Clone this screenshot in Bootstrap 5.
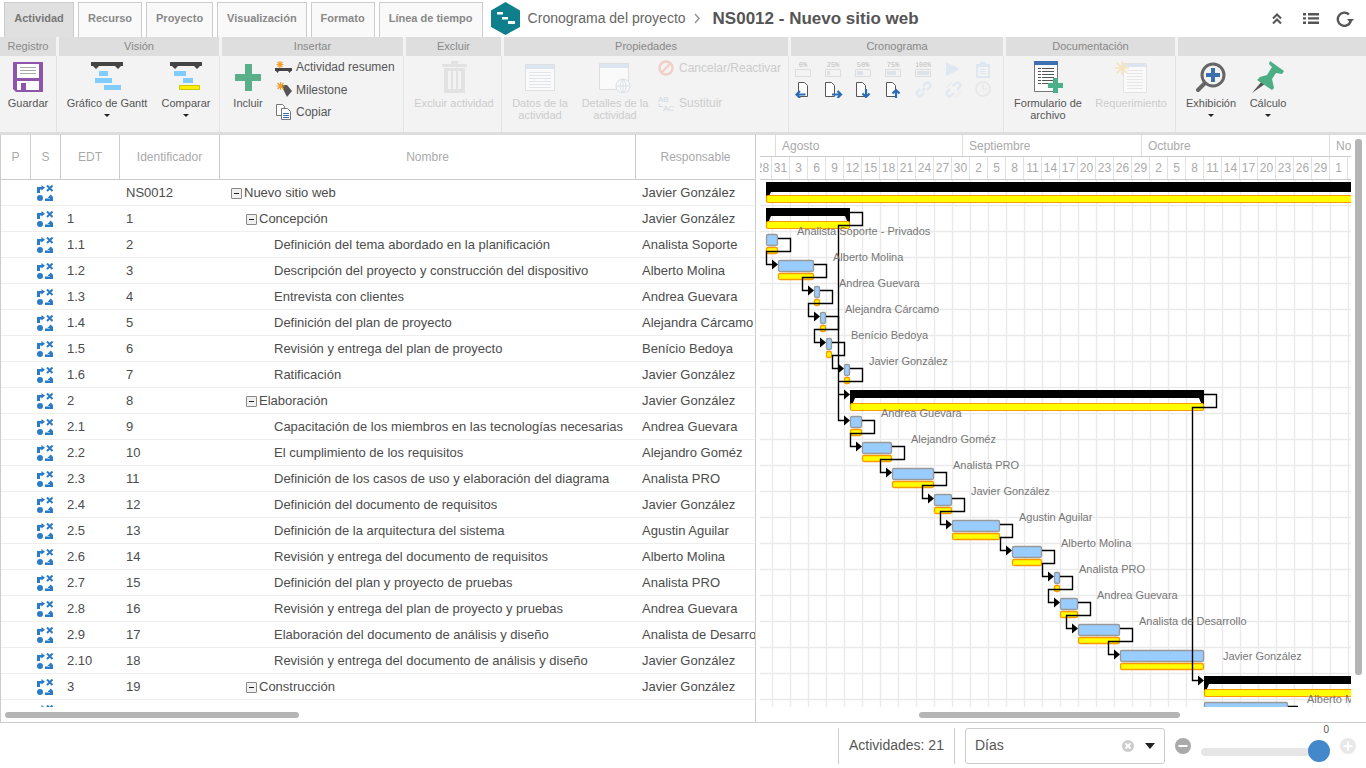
<!DOCTYPE html>
<html lang="es">
<head>
    <meta charset="UTF-8">
    <meta name="viewport" content="width=device-width, initial-scale=1.0">
    <title>Cronograma del proyecto</title>
    <link rel="stylesheet" href="https://cdn.jsdelivr.net/npm/bootstrap@5.3.0/dist/css/bootstrap.min.css">
    <style>
        html, body { height: 768px; overflow: hidden; }
        body { font-family: "Liberation Sans", Arial, sans-serif; background: #fff; color: #505050; }

        /* top bar */
        .top-bar { height: 37px; }
        .rib-tabs { padding: 2px 0 0 4px; gap: 4px; }
        .rib-tab { height: 35px; padding: 0 9px 3px; display: flex; align-items: center; justify-content: center; border: 1px solid #ccc; border-bottom: 0; background: #f9f9f9; color: #888; font-size: 11px; font-weight: 700; }
        .rib-tab.on { background: #e0e0e0; color: #777; width: 70px; }
        .rib-tab.long { width: 104px; }
        .logo-hex { margin: 0 8px 0 8px; }
        .crumb { font-size: 14px; color: #666; }
        .crumb-sep { margin: 0 12px 0 8px; }
        .plan-title { font-size: 17px; font-weight: 700; color: #555; }
        .top-tools { gap: 17px; padding-right: 12px; }

        /* ribbon */
        .ribbon { height: 98px; background: #f3f3f3; border-bottom: 3px solid #ddd; }
        .rb-group { display: flex; flex-direction: column; margin-right: 2px; flex: none; }
        .rb-head { height: 19px; margin-right: 1px; background: #dedede; color: #888; font-size: 11px; line-height: 19px; text-align: center; }
        .rb-body { flex: 1; display: flex; border-right: 1px solid #e3e3e3; }
        .w-reg { width: 57px; } .w-vis { width: 161px; } .w-ins { width: 182px; } .w-exc { width: 96px; }
        .w-pro { width: 285px; } .w-cro { width: 213px; } .w-doc { width: 170px; } .w-last { flex: 1; margin-right: 0; }
        .w-last .rb-head { margin-right: 0; }
        .w-last .rb-body { border-right: 0; }
        .rb-btn { display: flex; flex-direction: column; align-items: center; flex: none; font-size: 11px; line-height: 12px; text-align: center; color: #555; }
        .rb-ico { height: 32px; margin: 5px 0 4px; display: block; }
        .rb-off { color: #ccc; }
        .rb-caret { width: 0; height: 0; margin-top: 5px; border: 3px solid transparent; border-top-color: #222; border-bottom: 0; }
        .b96 { width: 96px; } .b62 { width: 62px; } .b52 { width: 52px; } .b56 { width: 56px; }
        .b72 { width: 72px; } .b78 { width: 78px; } .b84 { width: 84px; } .b82 { width: 82px; } .b66 { width: 66px; } .b48 { width: 48px; }
        .rb-list { font-size: 12px; color: #555; margin-left: 1px; }
        .rb-row { height: 22.5px; display: flex; align-items: center; gap: 4px; white-space: nowrap; }
        .rb-prop .rb-row { height: 22px; }
        .rb-prop { gap: 13px; margin-left: 4px; padding-top: 1px; color: #ccc; }
        .rb-prop .rb-row svg { margin-right: 1px; }
        .cron-grid { display: grid; grid-template-columns: repeat(7, 30px); grid-auto-rows: 17px; row-gap: 3px; padding: 5px 0 0 4px; }
        .cron-grid svg { display: block; }

        /* main panes */
        .plan-main { height: 588px; border-bottom: 1px solid #ccc; }
        .tree-pane { width: 756px; flex: none; border-left: 1px solid #ccc; border-right: 1px solid #ccc; }
        .tree-clip { height: 572px; overflow: hidden; }
        .plan-tbl { width: 754px; table-layout: fixed; border-collapse: separate; border-spacing: 0; font-size: 13px; margin: 0; }
        .plan-tbl>:not(caption)>*>* { padding: 0 6px; height: 26px; border-bottom: 1px solid #eee; color: #4c4c4c; white-space: nowrap; overflow: hidden; box-shadow: none; vertical-align: middle; }
        .plan-tbl>thead>tr>th { height: 45px; font-size: 12px; font-weight: 400; color: #aaa; text-align: center; border-bottom: 1px solid #ccc; border-right: 1px solid #ccc; }
        .plan-tbl>thead>tr>th:last-child { border-right: 0; }
        .c-p { width: 30px; } .c-s { width: 30px; } .c-e { width: 59px; } .c-i { width: 100px; } .c-n { width: 416px; } .c-r { width: 119px; }
        .stat-ico { display: block; margin: 1px 0 0 6px; }
        .tog-box { display: inline-block; width: 11px; height: 11px; margin-right: 2px; vertical-align: -2px; border: 1px solid #888; border-radius: 1px; background: #f0f0f0; position: relative; }
        .tog-box::after { content: ""; position: absolute; left: 2px; top: 4px; width: 5px; height: 1px; background: #222; }
        .tog-none { display: inline-block; width: 13px; }
        .h-track { height: 15px; padding-top: 5px; }
        .h-thumb { height: 6px; border-radius: 3px; background: #b5b5b5; }
        .tree-pane .h-thumb { width: 294px; margin-left: 4px; }
        .gantt-pane .h-thumb { width: 261px; margin-left: 159px; }

        .gantt-pane { flex: 1; padding-left: 4px; position: relative; }
        .gantt-wrap { width: 591px; overflow: hidden; }
        .gh-row { display: flex; font-size: 12px; color: #aaa; border-bottom: 1px solid #ccc; }
        .gh-month { height: 22px; line-height: 23px; }
        .gh-day { height: 23px; line-height: 22px; margin-left: -6px; }
        .gh-cell { flex: none; padding-left: 6px; border-right: 1px solid #ddd; white-space: nowrap; overflow: hidden; }
        .gh-day .gh-cell { width: 18px; padding: 0; text-align: center; border-right: 1px solid #e2e2e2; }
        .m0 { width: 16px; } .m1 { width: 187px; } .m2 { width: 179px; } .m3 { width: 188px; } .m4 { width: 21px; border-right: 0 !important; }
        #gantt-svg { display: block; width: 591px; height: 527px; }
        .bar-label { font-family: "Liberation Sans", Arial, sans-serif; font-size: 11px; fill: #777; }
        .v-thumb { position: absolute; left: 599px; top: 4px; width: 7px; height: 536px; border-radius: 3px; background: #b5b5b5; }

        /* footer */
        .plan-foot { height: 45px; padding-right: 10px; font-size: 14px; color: #555; }
        .foot-count { height: 36px; width: 117px; padding-left: 10px; border-left: 1px solid #ccc; border-right: 1px solid #ccc; }
        .foot-select { width: 200px; height: 36px; margin-left: 10px; padding: 0 9px; border: 1px solid #ccc; border-radius: 3px; }
        .foot-caret { width: 0; height: 0; margin-left: 11px; border: 5px solid transparent; border-top: 6px solid #222; border-bottom: 0; }
        .zoom-btn { width: 16px; height: 16px; flex: none; display: block; }
        .zoom-minus { margin-left: 10px; }
        .zoom-track { width: 120px; height: 8px; margin: 13px 19px 0 10px; border-radius: 4px; background: #e6e6e6; position: relative; }
        .zoom-thumb { position: absolute; right: -9px; top: -8px; width: 22px; height: 22px; border-radius: 50%; background: #4488cc; }
        .zoom-val { position: absolute; right: -8px; top: -24px; font-size: 10px; line-height: 12px; color: #555; }
    </style>
</head>
<body>

    <!-- Tabs and title -->
    <div class="top-bar d-flex align-items-start">
        <ul class="rib-tabs nav flex-nowrap">
            <li><a class="rib-tab on text-decoration-none" href="#">Actividad</a></li>
            <li><a class="rib-tab text-decoration-none" href="#">Recurso</a></li>
            <li><a class="rib-tab text-decoration-none" href="#">Proyecto</a></li>
            <li><a class="rib-tab text-decoration-none" href="#">Visualización</a></li>
            <li><a class="rib-tab text-decoration-none" href="#">Formato</a></li>
            <li><a class="rib-tab long text-decoration-none" href="#">Línea de tiempo</a></li>
        </ul>
        <svg class="logo-hex mt-0" width="29" height="35" viewBox="0 0 29 35">
            <path fill="#0f7f8c" d="M14.5 2 29 10.5V27L14.5 35 0 27V10.5Z"/>
            <path fill="#fff" d="M6 12h6v2.500H6zM11 17h6v2.500h-6zM17 21h7v3h-7z"/>
        </svg>
        <div class="d-flex align-items-center flex-grow-1" style="height:37px">
            <span class="crumb">Cronograma del proyecto</span>
            <svg class="crumb-sep" width="7" height="11" viewBox="0 0 7 11"><path d="M1 1l4 4.500L1 10" fill="none" stroke="#999" stroke-width="1.600"/></svg>
            <span class="plan-title">NS0012 - Nuevo sitio web</span>
            <div class="top-tools ms-auto d-flex align-items-center">
                <svg width="10" height="12" viewBox="0 0 10 12"><path d="M1 5.500 5 1.500 9 5.500M1 10.500 5 6.500 9 10.500" fill="none" stroke="#555" stroke-width="2"/></svg>
                <svg width="16" height="11" viewBox="0 0 16 11" style="margin-left:4px"><path fill="#555" d="M0 0h3v2.400H0zM5 0h11v2.400H5zM0 4.200h3v2.400H0zM5 4.200h11v2.400H5zM0 8.500h3v2.400H0zM5 8.500h11v2.400H5z"/></svg>
                <svg width="18" height="16" viewBox="0 0 18 16"><path d="M14.600 10.500A6.600 6.600 0 1 1 13 3.500" fill="none" stroke="#555" stroke-width="2.400"/><path fill="#555" d="M11 8h7l-3.500 4z"/></svg>
            </div>
        </div>
    </div>

    <!-- Ribbon -->
    <div class="ribbon d-flex">
        <div class="rb-group w-reg">
            <div class="rb-head">Registro</div>
            <div class="rb-body">
                <div class="rb-btn b56">
                    <svg class="rb-ico" width="30" height="32" viewBox="0 0 30 32"><path fill="#8e55aa" d="M0 1h30v30H3L0 28Z"/><path fill="#fff" d="M4 3h22v14H4z"/><path fill="#aaa" d="M7 6h16v1H7zM7 9h16v1H7zM7 12h16v1H7z"/><path fill="#fff" d="M4 20h22v9H4z"/><path fill="#8e55aa" d="M8 22h5v7H8z"/></svg>
                    Guardar
                </div>
            </div>
        </div>
        <div class="rb-group w-vis">
            <div class="rb-head">Visión</div>
            <div class="rb-body">
                <div class="rb-btn b96">
                    <svg class="rb-ico" width="32" height="32" viewBox="0 0 32 32"><path fill="#444" d="M0 1h32v4H0zM2 5h6l-3 3zM24 5h6l-3 3z"/><path fill="#80ccff" d="M8 10h9v5H8zM4 17h17v5H4zM13 24h17v5H13z"/></svg>
                    Gráfico de Gantt
                    <span class="rb-caret"></span>
                </div>
                <div class="rb-btn b62">
                    <svg class="rb-ico" width="32" height="32" viewBox="0 0 32 32"><path fill="#444" d="M0 1h32v4H0zM2 5h6l-3 3zM24 5h6l-3 3z"/><path fill="#80ccff" d="M4 10h12v5H4zM13 17h10v5H13z"/><path fill="#ffee00" stroke="#c8c800" d="M9.500 24.500h20v4h-20z"/></svg>
                    Comparar
                    <span class="rb-caret"></span>
                </div>
            </div>
        </div>
        <div class="rb-group w-ins">
            <div class="rb-head">Insertar</div>
            <div class="rb-body">
                <div class="rb-btn b52">
                    <svg class="rb-ico" width="26" height="32" viewBox="0 0 26 32"><path fill="#5aaf8a" d="M10 3h7v10h9v7h-9v10h-7V20H0v-7h10z"/></svg>
                    Incluir
                </div>
                <div class="rb-list">
                    <div class="rb-row"><svg width="17" height="15" viewBox="0 0 17 15"><path fill="none" stroke="#f0a030" stroke-width="1.200" d="M5 1v7M1.500 4.500h7M2.500 2l5 5M7.500 2l-5 5"/><path fill="#444" d="M0 8h17v3H0zM1 11h3l-1.500 2zM13 11h3l-1.500 2z"/></svg>Actividad resumen</div>
                    <div class="rb-row"><svg width="17" height="17" viewBox="0 0 17 17"><path fill="#555" d="M6 4h6l5 6-5 6z"/><path fill="none" stroke="#f0a030" stroke-width="1.200" d="M5.500 1v8M1.500 5h8M2.500 2l6 6M8.500 2l-6 6"/></svg>Milestone</div>
                    <div class="rb-row"><svg width="17" height="16" viewBox="0 0 17 16"><path fill="#fff" stroke="#777" d="M1.500 .5h6l2 2v9h-8z"/><path fill="#fff" stroke="#777" d="M6.500 4.500h6l3 3v8h-9z"/><path fill="#3a70b0" d="M8 9h6v1H8zM8 11h6v1H8zM8 13h6v1H8z"/></svg>Copiar</div>
                </div>
            </div>
        </div>
        <div class="rb-group w-exc">
            <div class="rb-head">Excluir</div>
            <div class="rb-body">
                <div class="rb-btn b96 rb-off">
                    <svg class="rb-ico" width="27" height="32" viewBox="0 0 27 32"><path fill="#e2e2e2" d="M1 3h25v3H1zM10 0h7v3h-7zM3 7h21v25H3z"/><path fill="#f3f3f3" d="M7 10h3v18H7zM12 10h3v18h-3zM17 10h3v18h-3z"/></svg>
                    Excluir actividad
                </div>
            </div>
        </div>
        <div class="rb-group w-pro">
            <div class="rb-head">Propiedades</div>
            <div class="rb-body">
                <div class="rb-btn b72 rb-off">
                    <svg class="rb-ico" width="30" height="32" viewBox="0 0 30 32"><path fill="#fafafa" stroke="#dfdfdf" d="M.5 3.500h29v26H.5z"/><path fill="#dde6f0" d="M1 4h28v4H1z"/><path fill="#e2e6ec" d="M4 11h22v1H4zM4 14h22v1H4zM4 17h22v1H4zM4 20h22v1H4zM4 23h22v1H4zM4 26h22v1H4z"/></svg>
                    Datos de la<br>actividad
                </div>
                <div class="rb-btn b78 rb-off">
                    <svg class="rb-ico" width="32" height="32" viewBox="0 0 32 32"><path fill="#fafafa" stroke="#dfdfdf" d="M.5 2.500h29v26H.5z"/><path fill="#dde6f0" d="M1 3h28v4H1z"/><circle cx="24" cy="25" r="7" fill="#fafafa" stroke="#d8dee6"/><path fill="none" stroke="#d8dee6" d="M17 25h14M24 18v14M24 18c-4 4-4 10 0 14M24 18c4 4 4 10 0 14"/></svg>
                    Detalles de la<br>actividad
                </div>
                <div class="rb-list rb-prop d-flex flex-column">
                    <div class="rb-row"><svg width="16" height="16" viewBox="0 0 16 16"><circle cx="8" cy="8" r="6.500" fill="none" stroke="#f0cfc9" stroke-width="2.400"/><path stroke="#f0cfc9" stroke-width="2.400" d="M3.500 12.500l9-9"/></svg>Cancelar/Reactivar</div>
                    <div class="rb-row"><svg width="16" height="17" viewBox="0 0 16 17"><text x="0" y="7" font-size="8" fill="#cfd8e2" font-family="Liberation Sans">AB</text><text x="5" y="16" font-size="8" fill="#cfd8e2" font-family="Liberation Sans">AC</text><path fill="none" stroke="#cfd8e2" d="M1 8.500v3h3.500"/></svg>Sustituir</div>
                </div>
            </div>
        </div>
        <div class="rb-group w-cro">
            <div class="rb-head">Cronograma</div>
            <div class="rb-body">
                <div class="cron-grid">
                    <svg width="17" height="17" viewBox="0 0 17 17"><text x="8" y="6" font-size="7" text-anchor="middle" fill="#bbb" font-family="Liberation Mono">0%</text><path fill="none" stroke="#ddd" d="M.5 8.500h15v7H.5z"/></svg>
                    <svg width="17" height="17" viewBox="0 0 17 17"><text x="8" y="6" font-size="7" text-anchor="middle" fill="#bbb" font-family="Liberation Mono">25%</text><path fill="none" stroke="#ddd" d="M.5 8.500h15v7H.5z"/><path fill="#dde2e8" d="M2 10h3v4H2z"/></svg>
                    <svg width="17" height="17" viewBox="0 0 17 17"><text x="8" y="6" font-size="7" text-anchor="middle" fill="#bbb" font-family="Liberation Mono">50%</text><path fill="none" stroke="#ddd" d="M.5 8.500h15v7H.5z"/><path fill="#dde2e8" d="M2 10h6v4H2z"/></svg>
                    <svg width="17" height="17" viewBox="0 0 17 17"><text x="8" y="6" font-size="7" text-anchor="middle" fill="#bbb" font-family="Liberation Mono">75%</text><path fill="none" stroke="#ddd" d="M.5 8.500h15v7H.5z"/><path fill="#dde2e8" d="M2 10h9v4H2z"/></svg>
                    <svg width="17" height="17" viewBox="0 0 17 17"><text x="8" y="6" font-size="6.500" text-anchor="middle" fill="#bbb" font-family="Liberation Mono">100%</text><path fill="none" stroke="#ddd" d="M.5 8.500h15v7H.5z"/><path fill="#dde2e8" d="M2 10h12v4H2z"/></svg>
                    <svg width="17" height="17" viewBox="0 0 17 17"><path fill="#dfe7f0" d="M1 1l14 7L1 15z"/></svg>
                    <svg width="17" height="17" viewBox="0 0 17 17"><path fill="#dfe7f0" d="M1 3h14v14H1z"/><path fill="#f3f3f3" d="M3 6h10v9H3z"/><path fill="#dfe7f0" d="M5 1h6v4H5zM5 8h6v1H5zM5 10h6v1H5zM5 12h6v1H5z"/></svg>
                    <svg width="18" height="17" viewBox="0 0 18 17"><path fill="#fff" stroke="#555" d="M3.500 1.500h6l3 3v11h-9z"/><path fill="none" stroke="#2a6db5" stroke-width="2.200" d="M1.500 13.500h9M5 10 1.500 13.500 5 17"/></svg>
                    <svg width="18" height="17" viewBox="0 0 18 17"><path fill="#fff" stroke="#555" d="M.5 1.500h6l3 3v11h-9z"/><path fill="none" stroke="#2a6db5" stroke-width="2.200" d="M7 13.500h9M12.500 10 16 13.500 12.500 17"/></svg>
                    <svg width="18" height="17" viewBox="0 0 18 17"><path fill="#fff" stroke="#555" d="M1.500 1.500h6l3 3v11h-9z"/><path fill="none" stroke="#2a6db5" stroke-width="2.200" d="M11 8v8M7.500 12.500 11 16l3.500-3.500"/></svg>
                    <svg width="18" height="17" viewBox="0 0 18 17"><path fill="#fff" stroke="#555" d="M1.500 1.500h6l3 3v11h-9z"/><path fill="none" stroke="#2a6db5" stroke-width="2.200" d="M11 17V9M7.500 12.500 11 9l3.500 3.500"/></svg>
                    <svg width="17" height="17" viewBox="0 0 17 17"><path fill="none" stroke="#dfe7f0" stroke-width="2.200" d="M7 10l3-3M5 8l-2.500 2.500a2.500 2.500 0 0 0 4 4L9 12M8 5l2.500-2.500a2.500 2.500 0 0 1 4 4L12 9"/></svg>
                    <svg width="17" height="17" viewBox="0 0 17 17"><path fill="none" stroke="#dfe7f0" stroke-width="2.200" d="M5 8l-2.500 2.500a2.500 2.500 0 0 0 4 4L9 12M8 5l2.500-2.500a2.500 2.500 0 0 1 4 4L12 9"/><path fill="none" stroke="#e6e6e6" d="M3 3l2 2M1 6h2M6 1v2M12 12l2 2M14 11h2M11 14v2"/></svg>
                    <svg width="17" height="17" viewBox="0 0 17 17"><circle cx="8" cy="8" r="7" fill="none" stroke="#e5e5e5" stroke-width="1.500"/><path fill="none" stroke="#e5e5e5" stroke-width="1.200" d="M8 3.500V8h4"/></svg>
                </div>
            </div>
        </div>
        <div class="rb-group w-doc">
            <div class="rb-head">Documentación</div>
            <div class="rb-body">
                <div class="rb-btn b84">
                    <svg class="rb-ico" width="30" height="32" viewBox="0 0 30 32"><path fill="#fff" stroke="#777" d="M1.500 .5h23v30h-23z"/><path fill="#3d70b0" d="M1 0h24v4H1z"/><path fill="#555" d="M5 7h3v1H5zM9 7h12v1H9zM5 10h3v1H5zM9 10h12v1H9zM5 13h3v1H5zM9 13h12v1H9zM5 16h3v1H5zM9 16h12v1H9zM5 19h3v1H5zM9 19h12v1H9zM5 22h3v1H5zM9 22h6v1H9z"/><path fill="#4cb088" d="M20 17h5v5h5v5h-5v5h-5v-5h-5v-5h5z"/></svg>
                    Formulario de<br>archivo
                </div>
                <div class="rb-btn b82 rb-off">
                    <svg class="rb-ico" width="32" height="32" viewBox="0 0 32 32"><path fill="#fafafa" stroke="#e2e2e2" d="M8.500 2.500h23v29h-23z"/><path fill="#dde6f0" d="M9 3h22v3H9z"/><path fill="#e6e6e6" d="M12 9h16v1H12zM12 12h16v1H12zM12 15h16v1H12zM12 18h16v1H12zM12 21h16v1H12zM12 24h16v1H12zM12 27h16v1H12z"/><path fill="none" stroke="#f5e2b8" stroke-width="1.500" d="M7 0v14M0 7h14M2 2l10 10M12 2 2 12"/></svg>
                    Requerimiento
                </div>
            </div>
        </div>
        <div class="rb-group w-last">
            <div class="rb-head">&nbsp;</div>
            <div class="rb-body">
                <div class="rb-btn b66">
                    <svg class="rb-ico" width="30" height="32" viewBox="0 0 30 32"><path stroke="#666" stroke-width="4" stroke-linecap="round" d="M9 22 2 29"/><circle cx="17" cy="14" r="11" fill="#f3f3f3" stroke="#666" stroke-width="3"/><path fill="#3a70b0" d="M15 7h4v5h5v4h-5v5h-4v-5h-5v-4h5z"/></svg>
                    Exhibición
                    <span class="rb-caret"></span>
                </div>
                <div class="rb-btn b48">
                    <svg class="rb-ico" width="32" height="32" viewBox="0 0 32 32"><path fill="#555" d="M0 32 10 20l3 3z"/><path fill="#4cae84" d="M18 0 32 10l-2 3-6-1-4 6 2 9-2 2L5 19l3-3 7-2 5-8-3-3z"/></svg>
                    Cálculo
                    <span class="rb-caret"></span>
                </div>
            </div>
        </div>
    </div>

    <!-- Tree and Gantt -->
    <div class="plan-main d-flex">
        <div class="tree-pane">
            <div class="tree-clip">
                <table class="table plan-tbl">
                    <thead>
                        <tr>
                            <th class="c-p">P</th>
                            <th class="c-s">S</th>
                            <th class="c-e">EDT</th>
                            <th class="c-i">Identificador</th>
                            <th class="c-n">Nombre</th>
                            <th class="c-r">Responsable</th>
                        </tr>
                    </thead>
                    <tbody id="plan-rows"></tbody>
                </table>
            </div>
            <div class="h-track"><div class="h-thumb"></div></div>
        </div>
        <div class="gantt-pane">
            <div class="gantt-wrap">
                <div class="gh-row gh-month">
                    <div class="gh-cell m0"></div>
                    <div class="gh-cell m1">Agosto</div>
                    <div class="gh-cell m2">Septiembre</div>
                    <div class="gh-cell m3">Octubre</div>
                    <div class="gh-cell m4">Noviembre</div>
                </div>
                <div class="gh-row gh-day" id="gantt-days"></div>
                <svg id="gantt-svg" viewBox="760 180 591 527"></svg>
                <div class="h-track"><div class="h-thumb"></div></div>
            </div>
            <div class="v-thumb"></div>
        </div>
    </div>

    <!-- Footer -->
    <div class="plan-foot d-flex align-items-center justify-content-end">
        <div class="foot-count d-flex align-items-center">Actividades: 21</div>
        <div class="foot-select d-flex align-items-center">
            <span class="flex-grow-1">Días</span>
            <svg width="12" height="12" viewBox="0 0 12 12"><circle cx="6" cy="6" r="6" fill="#ccc"/><path stroke="#fff" stroke-width="1.800" d="M3.500 3.500l5 5M8.500 3.500l-5 5"/></svg>
            <span class="foot-caret"></span>
        </div>
        <svg class="zoom-btn zoom-minus" viewBox="0 0 16 16"><circle cx="8" cy="8" r="8" fill="#aaa"/><path fill="#fff" d="M3.500 7h9v2h-9z"/></svg>
        <div class="zoom-track">
            <span class="zoom-val">0</span>
            <div class="zoom-thumb"></div>
        </div>
        <svg class="zoom-btn" viewBox="0 0 16 16"><circle cx="8" cy="8" r="8" fill="#e8e8e8"/><path fill="#fff" d="M7 3.500h2V7h3.500v2H9v3.500H7V9H3.500V7H7z"/></svg>
    </div>

    <script>
        const STATUS_ICON = '<svg class="stat-ico" width="16" height="16" viewBox="0 0 16 16" fill="#2a7bc8">'
            + '<path d="M0 2h4.500V0L8 2.800 4.500 5.600V4.500H3V8H0z"/>'
            + '<path fill="none" stroke="#2a7bc8" stroke-width="2" d="M10 .5l5.500 5.500M15.500 .5 10 6"/>'
            + '<circle cx="3" cy="13" r="3"/>'
            + '<path d="M8 13.500h5V13h-2.500L13.700 9.500 17 13h-1v3H8z"/></svg>';

        // edt, id, name, level, toggle, responsible
        const rows = [
            ['', 'NS0012', 'Nuevo sitio web', 0, true, 'Javier González'],
            ['1', '1', 'Concepción', 1, true, 'Javier González'],
            ['1.1', '2', 'Definición del tema abordado en la planificación', 2, false, 'Analista Soporte'],
            ['1.2', '3', 'Descripción del proyecto y construcción del dispositivo', 2, false, 'Alberto Molina'],
            ['1.3', '4', 'Entrevista con clientes', 2, false, 'Andrea Guevara'],
            ['1.4', '5', 'Definición del plan de proyecto', 2, false, 'Alejandra Cárcamo'],
            ['1.5', '6', 'Revisión y entrega del plan de proyecto', 2, false, 'Benício Bedoya'],
            ['1.6', '7', 'Ratificación', 2, false, 'Javier González'],
            ['2', '8', 'Elaboración', 1, true, 'Javier González'],
            ['2.1', '9', 'Capacitación de los miembros en las tecnologías necesarias', 2, false, 'Andrea Guevara'],
            ['2.2', '10', 'El cumplimiento de los requisitos', 2, false, 'Alejandro Goméz'],
            ['2.3', '11', 'Definición de los casos de uso y elaboración del diagrama', 2, false, 'Analista PRO'],
            ['2.4', '12', 'Definición del documento de requisitos', 2, false, 'Javier González'],
            ['2.5', '13', 'Definición de la arquitectura del sistema', 2, false, 'Agustin Aguilar'],
            ['2.6', '14', 'Revisión y entrega del documento de requisitos', 2, false, 'Alberto Molina'],
            ['2.7', '15', 'Definición del plan y proyecto de pruebas', 2, false, 'Analista PRO'],
            ['2.8', '16', 'Revisión y entrega del plan de proyecto y pruebas', 2, false, 'Andrea Guevara'],
            ['2.9', '17', 'Elaboración del documento de análisis y diseño', 2, false, 'Analista de Desarrollo'],
            ['2.10', '18', 'Revisión y entrega del documento de análisis y diseño', 2, false, 'Javier González'],
            ['3', '19', 'Construcción', 1, true, 'Javier González']
        ];

        let html = '';
        rows.forEach(r => {
            let toggle = r[4] ? '<span class="tog-box"></span>' : '<span class="tog-none"></span>';
            html += '<tr><td></td><td class="px-0">' + STATUS_ICON + '</td><td>' + r[0] + '</td><td>' + r[1] + '</td>'
                + '<td style="padding-left:' + (11 + 15 * r[3]) + 'px">' + toggle + r[2] + '</td><td>' + r[5] + '</td></tr>';
        });
        html += '<tr><td></td><td class="px-0">' + STATUS_ICON + '</td><td></td><td></td><td></td><td></td></tr>';
        document.getElementById('plan-rows').innerHTML = html;

        // day header
        const days = [28,31,3,6,9,12,15,18,21,24,27,30,2,5,8,11,14,17,20,23,26,29,2,5,8,11,14,17,20,23,26,29,1,4];
        document.getElementById('gantt-days').innerHTML = days.map(d => '<div class="gh-cell">' + d + '</div>').join('');

        // row index, x start, x end, label, label x, label middle y
        const tasks = [
            [2, 766, 778, 'Analista Soporte - Privados', 797, 232],
            [3, 778, 814, 'Alberto Molina', 833, 258],
            [4, 814, 820, 'Andrea Guevara', 839, 284],
            [5, 820, 826, 'Alejandra Cárcamo', 845, 310],
            [6, 826, 832, 'Benício Bedoya', 851, 336],
            [7, 844, 850, 'Javier González', 869, 362],
            [9, 850, 862, 'Andrea Guevara', 881, 414],
            [10, 862, 892, 'Alejandro Goméz', 911, 440],
            [11, 892, 934, 'Analista PRO', 953, 466],
            [12, 934, 952, 'Javier González', 971, 492],
            [13, 952, 1000, 'Agustin Aguilar', 1019, 518],
            [14, 1012, 1042, 'Alberto Molina', 1061, 544],
            [15, 1054, 1060, 'Analista PRO', 1079, 570],
            [16, 1060, 1078, 'Andrea Guevara', 1097, 596],
            [17, 1078, 1120, 'Analista de Desarrollo', 1139, 622],
            [18, 1120, 1204, 'Javier González', 1223, 657]
        ];
        const rowTop = r => 180 + 26 * r;

        let svg = '';
        for (let x = 772; x < 1351; x += 18) {
            svg += '<path stroke="#eaeaea" stroke-width="1.400" d="M' + (x + .5) + ' 180V707"/>';
        }
        for (let y = 205; y < 707; y += 26) {
            svg += '<path stroke="#eaeaea" stroke-width="1.400" d="M760 ' + (y + .5) + 'H1351"/>';
        }

        function summaryBar(row, x1, x2, closed) {
            let t = rowTop(row), s = '';
            let barEnd = row === 0 ? t + 12 : t + 10;
            s += '<rect x="' + x1 + '" y="' + (t + 2) + '" width="' + (x2 - x1) + '" height="' + (barEnd - t - 2) + '" fill="#000"/>';
            s += '<polygon points="' + x1 + ',' + barEnd + ' ' + (x1 + 5) + ',' + barEnd + ' ' + x1 + ',' + (t + 22) + '"/>';
            if (closed) {
                s += '<polygon points="' + x2 + ',' + barEnd + ' ' + (x2 - 5) + ',' + barEnd + ' ' + x2 + ',' + (t + 22) + '"/>';
            }
            s += '<rect x="' + (x1 + .5) + '" y="' + (t + 15.5) + '" width="' + (x2 - x1 - (closed ? 1 : -3)) + '" height="7" rx="1.500" fill="#ff0" stroke="#f90" stroke-width="1.200"/>';
            return s;
        }
        svg += summaryBar(0, 766, 1351, false);
        svg += summaryBar(1, 766, 850, true);
        svg += summaryBar(8, 850, 1204, true);
        svg += summaryBar(19, 1204, 1351, false);

        function taskBar(row, x1, x2) {
            let t = rowTop(row), w = x2 - x1 - 1;
            return '<rect x="' + (x1 + .5) + '" y="' + (t + 2.5) + '" width="' + w + '" height="11" rx="1.500" fill="#9cf" stroke="#999" stroke-width="1.300"/>'
                + '<rect x="' + (x1 + .5) + '" y="' + (t + 15.5) + '" width="' + w + '" height="6" rx="1.500" fill="#ff0" stroke="#f90" stroke-width="1.300"/>';
        }
        tasks.forEach(t => { svg += taskBar(t[0], t[1], t[2]); });
        svg += taskBar(20, 1204, 1288);

        function arrow(tip, y) {
            return '<polygon points="' + (tip - 6) + ',' + (y - 5) + ' ' + tip + ',' + y + ' ' + (tip - 6) + ',' + (y + 5) + '"/>';
        }
        // finish-to-start link between consecutive rows
        function link(rowA, xEnd, rowB, xStart) {
            let ya = rowTop(rowA) + 6.5, yb = rowTop(rowB) + 6.5, left = xStart - 12 + .5;
            return '<path fill="none" stroke="#000" stroke-width="1.400" d="M' + xEnd + ' ' + ya + 'H' + (xEnd + 12.5) + 'V' + (rowTop(rowA) + 19.5)
                + 'H' + left + 'V' + yb + 'H' + (xStart - 6) + '"/>' + arrow(xStart, yb);
        }
        for (let i = 0; i < 15; i++) {
            let a = tasks[i], b = tasks[i + 1];
            if (a[0] === 7) continue;
            svg += link(a[0], a[2], b[0], b[1]);
        }
        // links through the summary rows
        svg += '<path fill="none" stroke="#000" stroke-width="1.400" d="M850 212.500H862.500V225.500H838.500V420.500H844M838.500 394.500H844M850 368.500H862.500V381.500H838.500"/>';
        svg += arrow(850, 394.5) + arrow(850, 420.5);
        svg += '<path fill="none" stroke="#000" stroke-width="1.400" d="M1204 394.500H1216.500V407.500H1192.500V680.500H1198M1288 706.500H1298"/>';
        svg += arrow(1204, 680.5);

        tasks.forEach(t => {
            svg += '<text class="bar-label" x="' + t[4] + '" y="' + t[5] + '" dominant-baseline="middle">' + t[3] + '</text>';
        });
        svg += '<text class="bar-label" x="1307" y="700" dominant-baseline="middle">Alberto Molina</text>';
        document.getElementById('gantt-svg').innerHTML = svg;
    </script>

    <script src="https://cdn.jsdelivr.net/npm/bootstrap@5.3.0/dist/js/bootstrap.bundle.min.js"></script>
</body>
</html>
